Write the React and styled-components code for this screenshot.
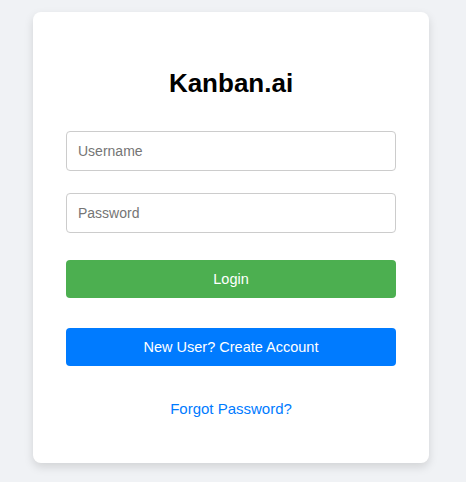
import React from "react";
import styled, { createGlobalStyle } from "styled-components";

const GlobalStyle = createGlobalStyle`
  html, body {
    margin: 0;
    padding: 0;
    background: #f0f2f5;
    font-family: "Liberation Sans", Arial, sans-serif;
  }
  * { box-sizing: border-box; }
`;

const Page = styled.div`
  min-height: 482px;
  padding: 12px 37px 19px 33px;
  display: flex;
  align-items: flex-start;
`;

const Card = styled.form`
  flex: 1;
  background: #ffffff;
  border-radius: 8px;
  box-shadow: 0 4px 10px rgba(0, 0, 0, 0.13);
  padding: 56px 33px 46px;
  display: flex;
  flex-direction: column;
`;

const Title = styled.h1`
  margin: 0 0 33px;
  font-size: 26px;
  line-height: 30px;
  font-weight: 700;
  text-align: center;
  color: #000;
`;

const Input = styled.input`
  display: block;
  width: 100%;
  height: 40px;
  margin: 0 0 ${(p) => p.$gap}px;
  padding: 0 11px;
  border: 1px solid #ccc;
  border-radius: 4px;
  font-family: inherit;
  font-size: 14px;
  color: #333;
  background: #fff;
  outline: none;
  &::placeholder { color: #757575; }
`;

const Button = styled.button`
  display: block;
  width: 100%;
  height: 38px;
  margin: 0 0 ${(p) => p.$gap}px;
  border: none;
  border-radius: 4px;
  background: ${(p) => p.$bg};
  color: #fff;
  font-family: inherit;
  font-size: 14.5px;
  cursor: pointer;
`;

const LinkText = styled.a`
  display: block;
  text-align: center;
  font-size: 15px;
  line-height: 17px;
  color: #007bff;
  text-decoration: none;
  cursor: pointer;
`;

export default function App() {
  return (
    <>
      <GlobalStyle />
      <Page>
        <Card onSubmit={(e) => e.preventDefault()}>
          <Title>Kanban.ai</Title>
          <Input type="text" placeholder="Username" $gap={22} />
          <Input type="password" placeholder="Password" $gap={27} />
          <Button type="submit" $bg="#4caf50" $gap={30}>Login</Button>
          <Button type="button" $bg="#007bff" $gap={34}>New User? Create Account</Button>
          <LinkText>Forgot Password?</LinkText>
        </Card>
      </Page>
    </>
  );
}
